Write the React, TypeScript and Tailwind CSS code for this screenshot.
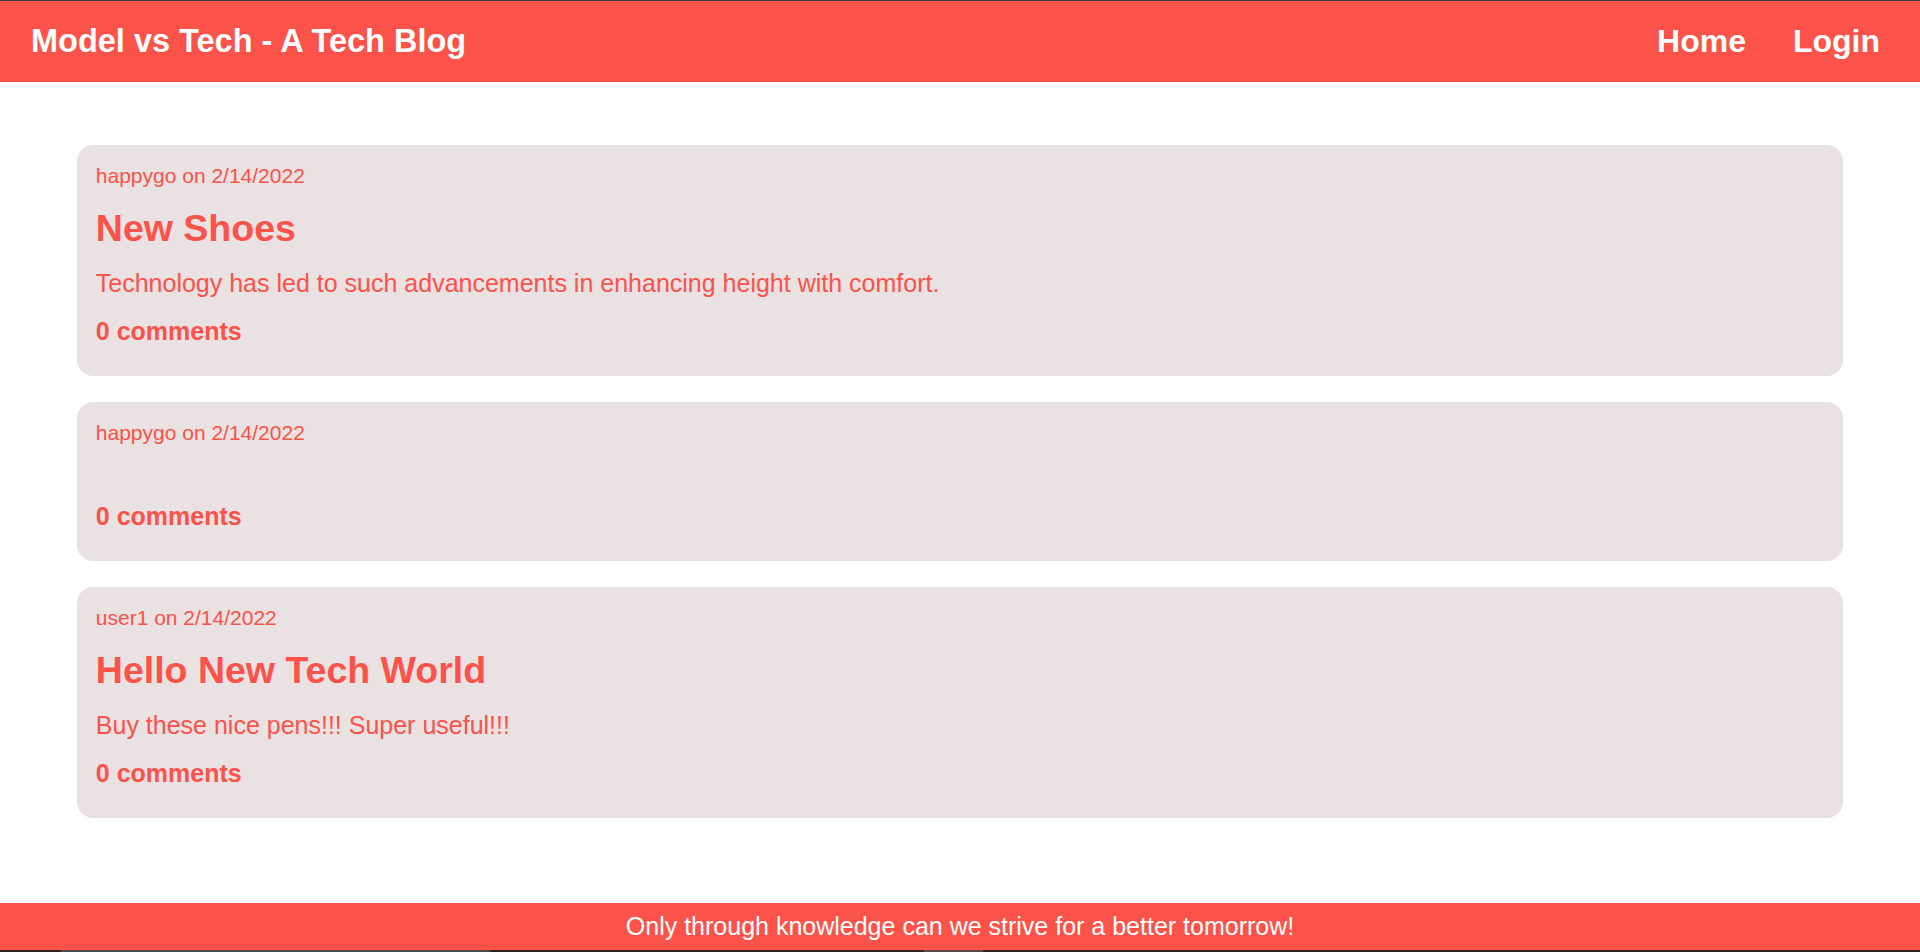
import React from "react";

type Post = { author: string; date: string; title: string; body: string; comments: number };

const posts: Post[] = [
  {
    author: "happygo",
    date: "2/14/2022",
    title: "New Shoes",
    body: "Technology has led to such advancements in enhancing height with comfort.",
    comments: 0,
  },
  { author: "happygo", date: "2/14/2022", title: "", body: "", comments: 0 },
  {
    author: "user1",
    date: "2/14/2022",
    title: "Hello New Tech World",
    body: "Buy these nice pens!!! Super useful!!!",
    comments: 0,
  },
];

function PostCard({ post }: { post: Post }) {
  return (
    <article className="w-[92%] mx-auto bg-[#e9e1e2] rounded-[16px] pt-[19px] pb-[30px] px-[19px] flex flex-col gap-[19px] text-[#fb5249]">
      <p className="text-[21px] leading-[24px]">
        {post.author} on {post.date}
      </p>
      <h2 className="text-[37.5px] leading-[43px] font-bold">{post.title}</h2>
      <p className="text-[25px] leading-[29px]">{post.body}</p>
      <p className="text-[25px] leading-[29px] font-bold">{post.comments} comments</p>
    </article>
  );
}

export default function App() {
  return (
    <div
      className="min-h-screen flex flex-col bg-white"
      style={{ fontFamily: '"Liberation Sans", Arial, sans-serif' }}
    >
      <div className="h-px bg-[#3c3c3c]" />
      <header className="h-[81px] bg-[#fb5249] flex items-center justify-between pl-[31px] pr-[40px] text-white">
        <h1 className="text-[32.5px] leading-[37px] font-bold">Model vs Tech - A Tech Blog</h1>
        <nav className="flex items-center gap-[47px] text-[32px] leading-[37px] font-bold">
          <a href="#">Home</a>
          <a href="#">Login</a>
        </nav>
      </header>
      <main className="flex-1 pt-[63px] flex flex-col gap-[26px]">
        {posts.map((p, i) => (
          <PostCard key={i} post={p} />
        ))}
      </main>
      <footer className="h-[47px] bg-[#fb5249] flex items-center justify-center text-white text-[25px] leading-[29px]">
        Only through knowledge can we strive for a better tomorrow!
      </footer>
      <div className="h-[2px] bg-[#33211c] flex">
        <div className="w-[61px]" />
        <div className="w-[429px] bg-[#4a4a4a]" />
        <div className="w-[434px]" />
        <div className="w-[59px] bg-[#5a4a45]" />
      </div>
    </div>
  );
}
